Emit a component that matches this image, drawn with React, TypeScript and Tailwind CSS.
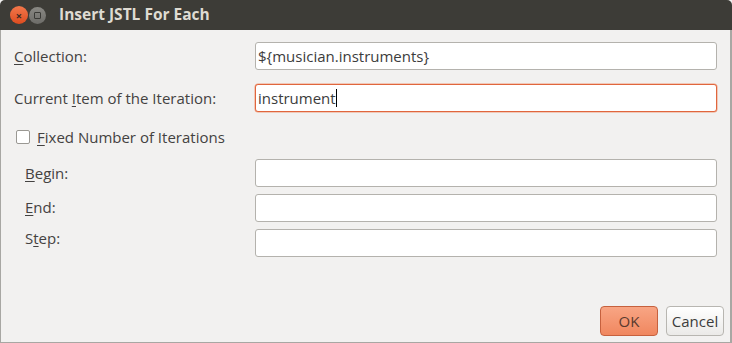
import React from 'react';

const font = { fontFamily: '"Open Sans", "DejaVu Sans", sans-serif' };

function Mn({ pre = '', k, post }: { pre?: string; k: string; post: string }) {
  return (
    <span>
      {pre}
      <span className="underline underline-offset-2 decoration-1">{k}</span>
      {post}
    </span>
  );
}

function Field({ value = '', active = false }: { value?: string; active?: boolean }) {
  return (
    <div
      className={
        'h-[28px] flex-1 rounded-[3px] bg-white px-[2px] flex items-center text-[15px] text-[#3c3c3c] ' +
        (active ? 'border border-[#e0663d] shadow-[0_0_0_0.5px_#f0a080]' : 'border border-[#b4b2ad]')
      }
    >
      {value}
      {active && <span className="inline-block w-px h-[18px] bg-black" />}
    </div>
  );
}

export default function App() {
  return (
    <div className="w-[732px] h-[343px] flex flex-col bg-[#f2f1f0] overflow-hidden" style={font}>
      <div className="h-[30px] bg-[#3d3c37] flex items-center shrink-0 rounded-t-[5px]">
        <div className="ml-[10px] w-[18px] h-[18px] rounded-full bg-gradient-to-b from-[#f2774a] to-[#dd4c1e] flex items-center justify-center text-[#3a2a22] text-[11px] font-bold leading-none">
          ×
        </div>
        <div className="ml-[1px] w-[17px] h-[17px] rounded-full bg-gradient-to-b from-[#8a8984] to-[#6d6c68] flex items-center justify-center">
          <div className="w-[7px] h-[7px] border border-[#3a3a36] rounded-[1px]" />
        </div>
        <div className="ml-[13px] text-[#dfdbd2] text-[15.5px] font-bold">Insert JSTL For Each</div>
      </div>
      <div className="flex-1 flex flex-col border-l border-r-2 border-b border-[#a8a7a3] text-[15px] text-[#444241]">
        <div className="flex items-center pl-[13px] pr-[13px] mt-[12px]">
          <div className="w-[241px]"><Mn k="C" post="ollection:" /></div>
          <Field value="${musician.instruments}" />
        </div>
        <div className="flex items-center pl-[13px] pr-[13px] mt-[14px]">
          <div className="w-[241px]"><Mn pre="Current " k="I" post="tem of the Iteration:" /></div>
          <Field value="instrument" active />
        </div>
        <div className="flex items-center pl-[15px] mt-[16px] h-[18px]">
          <div className="w-[14px] h-[14px] rounded-[2px] border border-[#9a9893] bg-white" />
          <div className="ml-[7px]"><Mn k="F" post="ixed Number of Iterations" /></div>
        </div>
        <div className="flex flex-col gap-[7px] mt-[13px]">
          <div className="flex items-center pl-[24px] pr-[13px]">
            <div className="w-[230px]"><Mn k="B" post="egin:" /></div>
            <Field />
          </div>
          <div className="flex items-center pl-[24px] pr-[13px]">
            <div className="w-[230px] -mt-[2px]"><Mn k="E" post="nd:" /></div>
            <Field />
          </div>
          <div className="flex items-center pl-[24px] pr-[13px]">
            <div className="w-[230px] -mt-[2px] self-start"><Mn pre="S" k="t" post="ep:" /></div>
            <Field />
          </div>
        </div>
        <div className="flex-1" />
        <div className="flex justify-end gap-[8px] pr-[6px] pb-[6px]">
          <button className="w-[58px] h-[30px] rounded-[4px] border border-[#c6613e] bg-gradient-to-b from-[#f8a584] to-[#f0875f] text-[#5a3a2e] text-[15px]">
            OK
          </button>
          <button className="w-[58px] h-[30px] rounded-[4px] border border-[#b8b6b1] bg-gradient-to-b from-[#ffffff] to-[#ebeae8] text-[#3c3c3c] text-[15px]">
            Cancel
          </button>
        </div>
      </div>
    </div>
  );
}
